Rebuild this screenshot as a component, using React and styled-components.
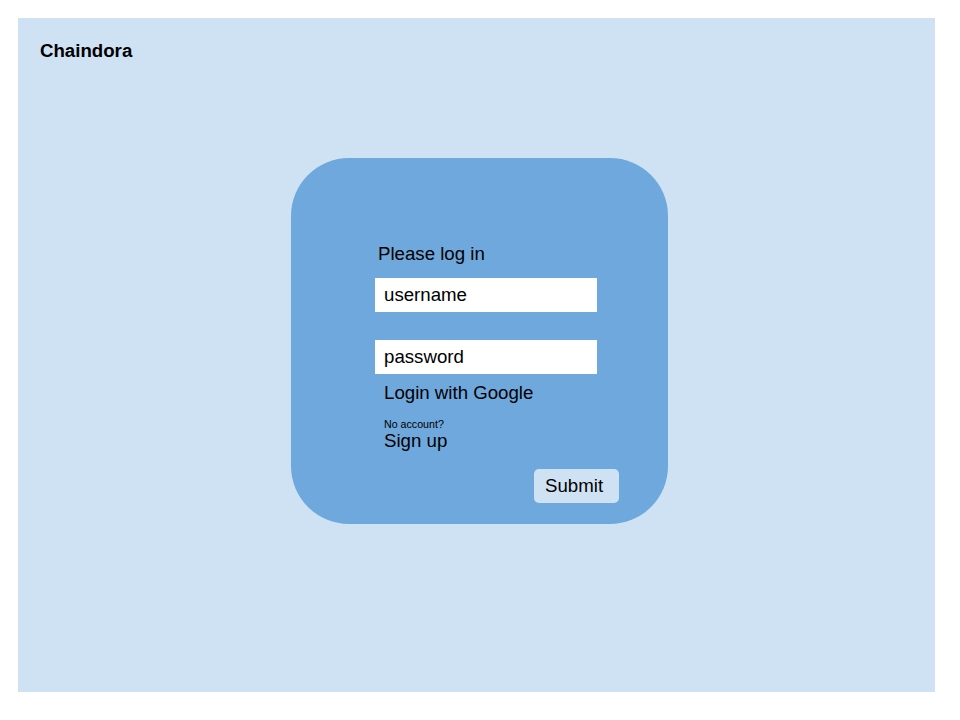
import styled, {createGlobalStyle} from 'styled-components';

const GlobalStyle = createGlobalStyle`
    * {
        box-sizing: border-box;
    }

    body {
        margin: 0;
        background: #FFFFFF;
        font-family: 'Liberation Sans', Arial, sans-serif;
        color: #000000;
    }
`;

export default function App() {
    return (
        <>
            <GlobalStyle/>
            <Page>
                <Canvas>
                    <Brand>Chaindora</Brand>

                    <Card>
                        <Form>
                            <Title>Please log in</Title>

                            <Input defaultValue='username'/>
                            <Input defaultValue='password' gap={28}/>

                            <Link>Login with Google</Link>

                            <Hint>No account?</Hint>
                            <Link as='a' top={0}>Sign up</Link>

                            <Submit>Submit</Submit>
                        </Form>
                    </Card>
                </Canvas>
            </Page>
        </>
    );
}

const Page = styled.div`
    padding: 18px;
`;

const Canvas = styled.div`
    width: 917px;
    height: 674px;
    padding: 22px 22px;
    background: #CFE2F3;
`;

const Brand = styled.h1`
    margin: 0;
    font-size: 18.67px;
    line-height: 22px;
    font-weight: 700;
`;

const Card = styled.div`
    width: 377px;
    height: 366px;
    margin: 96px 0 0 251px;
    padding: 85px 0 0 84px;
    border-radius: 58px;
    background: #6FA8DC;
`;

const Form = styled.div`
    width: 222px;
    display: flex;
    flex-direction: column;
    align-items: flex-start;
`;

const Title = styled.p`
    margin: 0 0 0 3px;
    font-size: 18.67px;
    line-height: 22px;
`;

const Input = styled.input`
    width: 222px;
    height: 34px;
    margin-top: ${props => props.gap ?? 13}px;
    padding: 0 9px;
    border: none;
    outline: none;
    background: #FFFFFF;
    font-family: 'Liberation Sans', Arial, sans-serif;
    font-size: 18.67px;
    color: #000000;
`;

const Link = styled.p`
    margin: ${props => props.top ?? 8}px 0 0 9px;
    font-size: 18.67px;
    line-height: 22px;
    color: #000000;
    text-decoration: none;
    cursor: pointer;
`;

const Hint = styled.p`
    margin: 14px 0 0 9px;
    font-size: 10.67px;
    line-height: 12px;
`;

const Submit = styled.button`
    width: 85px;
    height: 34px;
    margin: 17px 0 0 159px;
    padding: 0 0 0 11px;
    border: none;
    border-radius: 5px;
    background: #CFE2F3;
    font-family: 'Liberation Sans', Arial, sans-serif;
    font-size: 18.67px;
    color: #000000;
    text-align: left;
    cursor: pointer;
`;
